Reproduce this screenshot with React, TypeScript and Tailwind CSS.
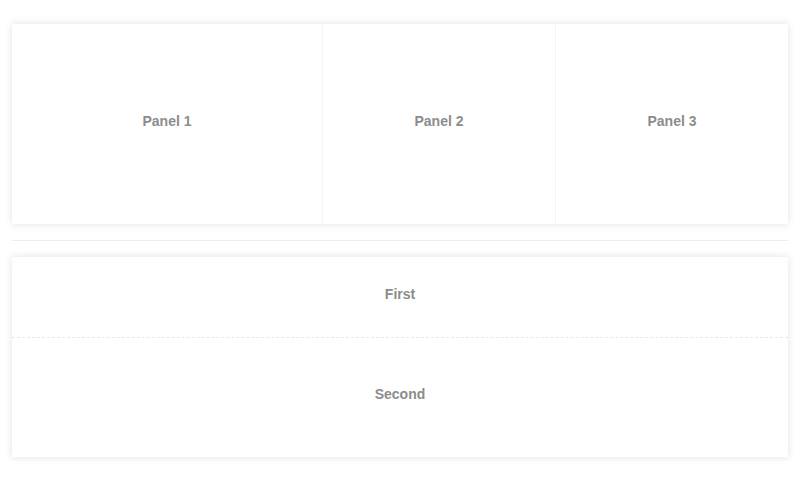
export default function App() {
  const label = "text-[14px] font-bold text-[#8c8c8c] pb-[6px]";
  return (
    <div className="min-h-[481px] bg-white px-[12px] pt-[24px]" style={{ fontFamily: '"Liberation Sans", Arial, sans-serif' }}>
      <div className="flex h-[200px] bg-white shadow-[0_0_8px_rgba(0,0,0,0.12)]">
        <div className={`flex w-[310px] items-center justify-center ${label}`}>Panel 1</div>
        <div className="w-px bg-[#f4f4f4]" />
        <div className={`flex flex-1 items-center justify-center ${label}`}>Panel 2</div>
        <div className="w-px bg-[#f4f4f4]" />
        <div className={`flex flex-1 items-center justify-center ${label}`}>Panel 3</div>
      </div>
      <div className="my-[16px] h-px bg-[#ececec]" />
      <div className="flex h-[200px] flex-col bg-white shadow-[0_0_8px_rgba(0,0,0,0.12)]">
        <div className={`flex h-[80px] items-center justify-center ${label}`}>First</div>
        <div className="border-t border-dashed border-[#e8e8e8]" />
        <div className={`flex flex-1 items-center justify-center ${label}`}>Second</div>
      </div>
    </div>
  );
}
